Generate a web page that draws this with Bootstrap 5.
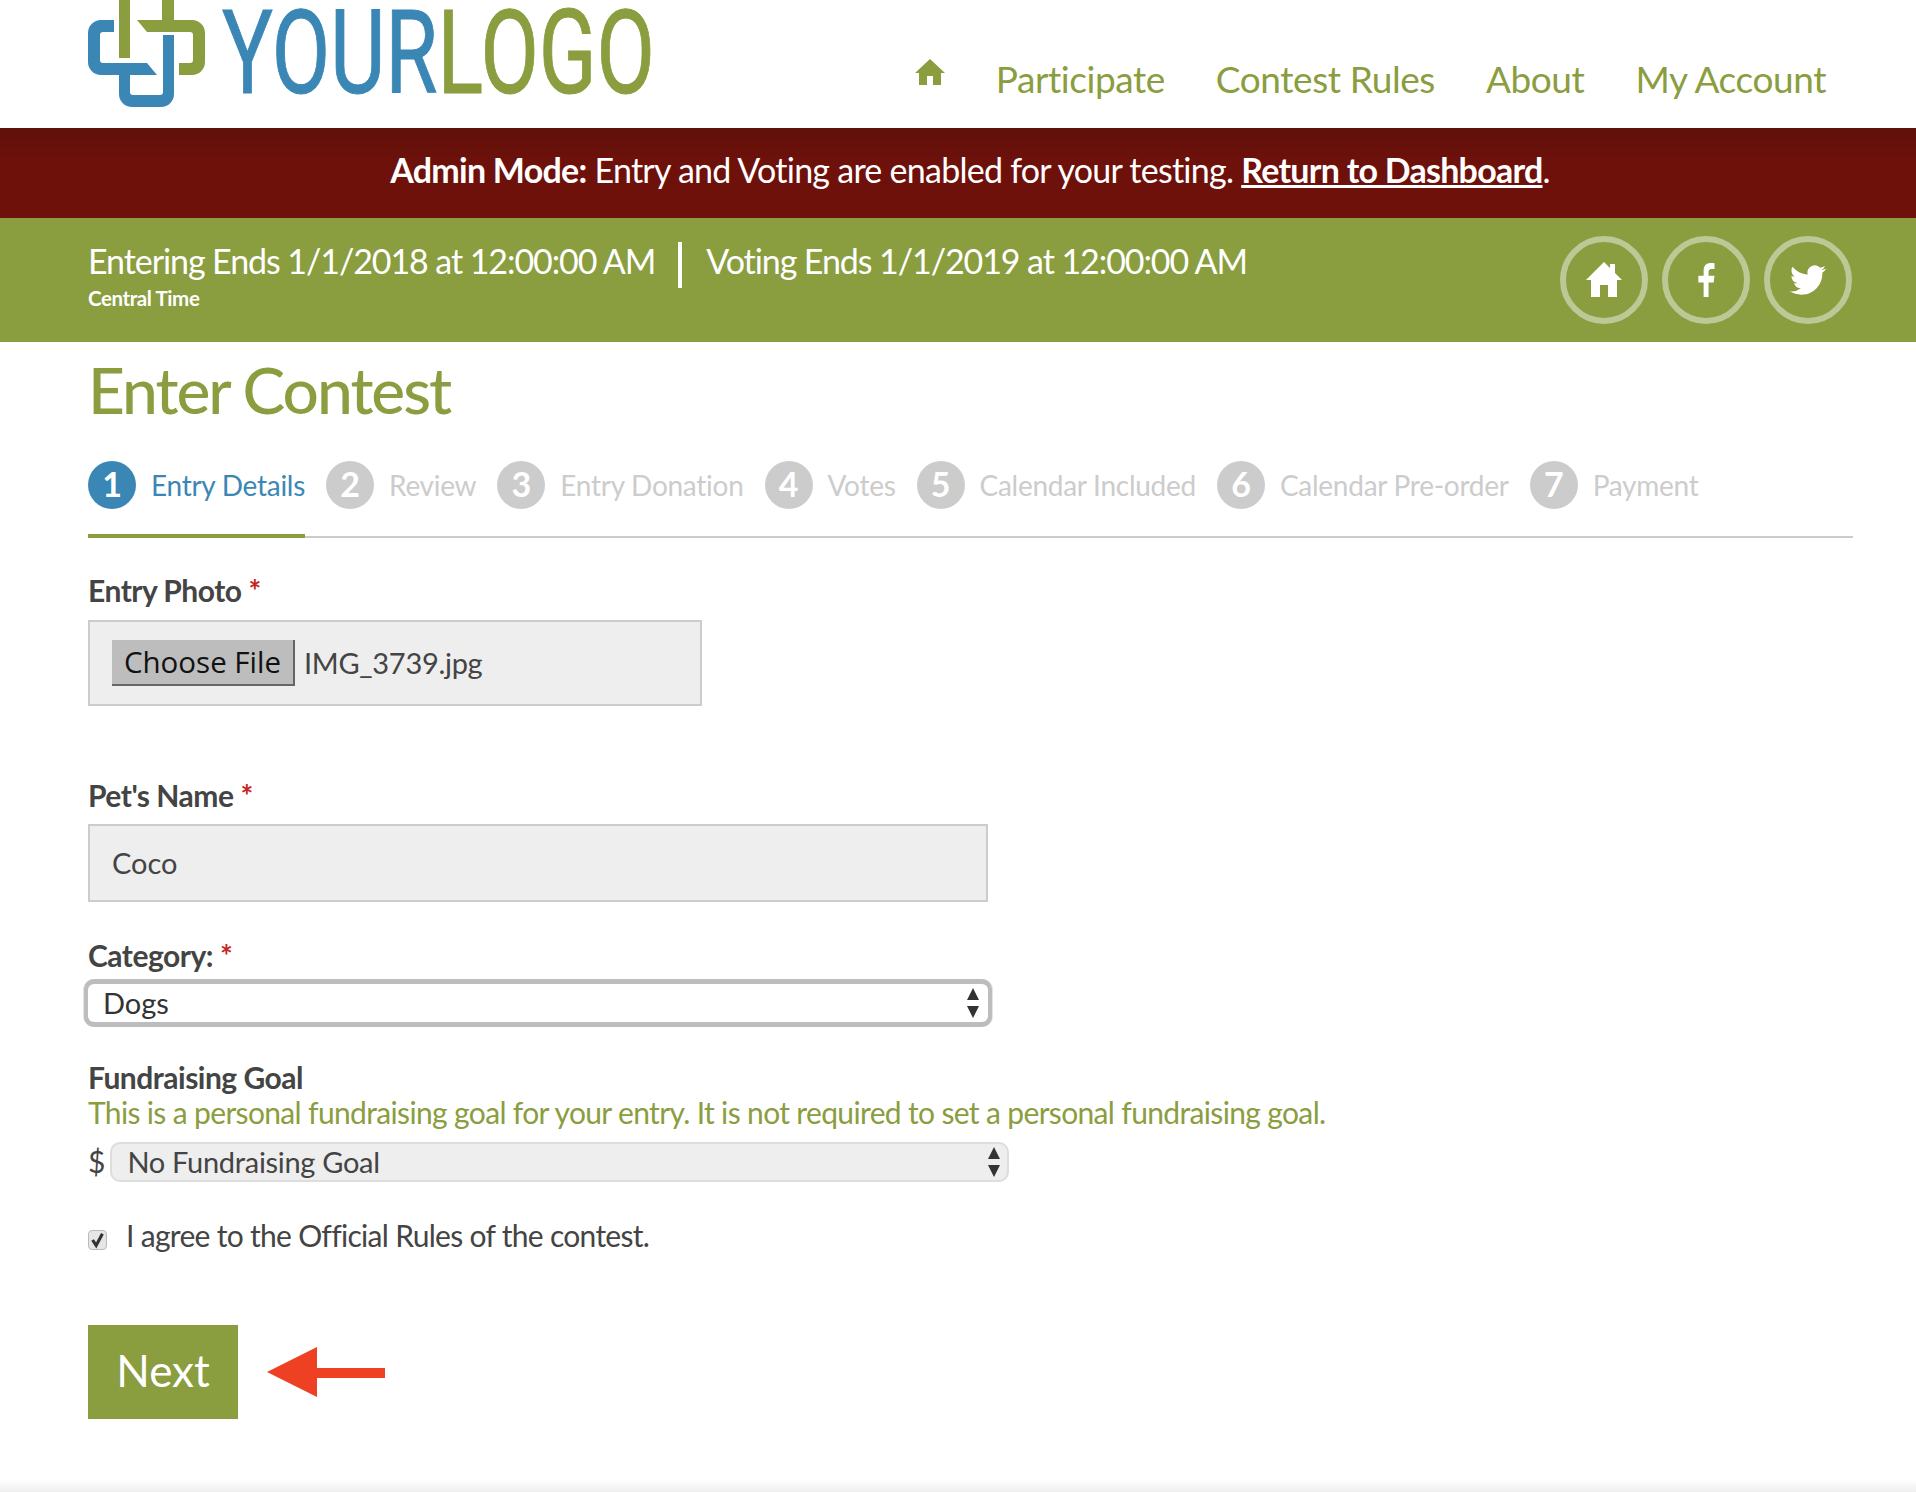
<!DOCTYPE html>
<html lang="en">
<head>
    <meta charset="UTF-8">
    <meta name="viewport" content="width=device-width, initial-scale=1.0">
    <title>Enter Contest</title>
    <link rel="stylesheet" href="https://cdn.jsdelivr.net/npm/bootstrap@5.3.3/dist/css/bootstrap.min.css">
    <script src="https://cdn.jsdelivr.net/npm/bootstrap@5.3.3/dist/js/bootstrap.bundle.min.js"></script>
    <style>
        body {
            margin: 0;
            height: 1492px;
            overflow: hidden;
            font-family: Lato, "Liberation Sans", sans-serif;
            color: #444;
            background: #fff;
        }

        .site-head {
            height: 128px;
            padding: 0 90px 0 80px;
            overflow: hidden;
        }

        .logo-word {
            font-family: Roboto, sans-serif;
            font-size: 116px;
            font-weight: 400;
            fill: #3a87b5;
            stroke: #3a87b5;
            stroke-width: 1px;
        }

        .logo-word tspan {
            fill: #8a9d3f;
            stroke: #8a9d3f;
        }

        .main-nav {
            gap: 51px;
            padding-top: 56px;
        }

        .main-nav a {
            color: #8a9d3f;
            font-size: 37px;
            line-height: 46px;
            letter-spacing: -0.42px;
            text-decoration: none;
        }

        .nav-home {
            margin: 0 0 15px;
            width: 30px;
            height: 26px;
            fill: #8a9d3f;
        }

        .admin-bar {
            height: 90px;
            padding: 0 0 8px 24px;
            background: linear-gradient(#61100a, #6e110b 40%);
            color: #fff;
            font-size: 34px;
            letter-spacing: -0.74px;
        }

        .admin-bar a {
            color: #fff;
            font-weight: 700;
        }

        .date-bar {
            height: 124px;
            background: #8a9d3f;
            color: #fff;
            padding: 0 64px 0 88px;
        }

        .date-line {
            font-size: 34px;
            line-height: 40px;
            letter-spacing: -1.08px;
            margin-top: 16px;
        }

        .date-rule {
            width: 4px;
            height: 46px;
            background: #fff;
            margin: 8px 24px 0 23px;
        }

        .tz-note {
            font-size: 20.5px;
            font-weight: 700;
            letter-spacing: -0.4px;
            line-height: 24px;
            margin-top: -2px;
        }

        .round-link {
            width: 88px;
            height: 88px;
            border: 6px solid #bcc895;
            border-radius: 50%;
        }

        .round-link svg {
            fill: #fff;
        }

        .round-row {
            gap: 14px;
        }

        .page-body {
            padding: 0 63px 0 88px;
        }

        .page-title {
            color: #8a9d3f;
            font-size: 64px;
            line-height: 76px;
            letter-spacing: -2px;
            margin: 10px 0 0;
        }

        .step-row {
            height: 78px;
            margin-top: 32px;
            border-bottom: 2px solid #ccc;
            gap: 21px;
        }

        .step-item {
            height: 78px;
            gap: 15px;
            padding-top: 1px;
            color: #ccc;
            font-size: 28px;
            line-height: 48px;
            letter-spacing: -0.27px;
            margin-bottom: -2px;
        }

        .step-item.is-on {
            color: #3a87b5;
            border-bottom: 4px solid #8a9d3f;
        }

        .step-num {
            width: 48px;
            height: 48px;
            border-radius: 50%;
            background: #ccc;
            color: #fff;
            font-size: 34px;
            line-height: 46px;
            font-weight: 700;
            text-align: center;
        }

        .is-on .step-num {
            background: #3a87b5;
        }

        .field-label {
            display: block;
            font-size: 30px;
            line-height: 36px;
            font-weight: 700;
            letter-spacing: -0.5px;
            color: #444;
            margin: 0;
        }

        .first-label {
            margin-top: 34px;
        }

        .pet-label {
            margin-top: 71px;
        }

        .cat-label {
            margin-top: 35px;
        }

        .goal-label {
            margin-top: 37px;
        }

        .req-star {
            color: #c4261d;
            margin-left: 7px;
        }

        .file-box {
            width: 614px;
            height: 86px;
            background: #eee;
            border: 2px solid #ccc;
            padding-left: 22px;
            margin-top: 12px;
            font-size: 29px;
            letter-spacing: -0.3px;
            gap: 9px;
        }

        .file-btn {
            width: 183px;
            height: 46px;
            padding: 0;
            background: #bdbdbd;
            border: 0;
            border-right: 2px solid #666;
            border-bottom: 2px solid #666;
            color: #111;
            font-family: "Open Sans", sans-serif;
            font-size: 29.5px;
            line-height: 44px;
            letter-spacing: 0;
        }

        .text-box {
            width: 900px;
            height: 78px;
            background: #eee;
            border: 2px solid #ccc;
            border-radius: 0;
            color: #444;
            font-size: 29px;
            padding: 0 22px 1px;
            margin-top: 11px;
        }

        .pick-box {
            appearance: none;
            font-size: 29px;
            color: #333;
            background-repeat: no-repeat;
            background-image: url("data:image/svg+xml,%3Csvg xmlns='http://www.w3.org/2000/svg' viewBox='0 0 14 30'%3E%3Cpath fill='%23333' d='M7 0l6 12H1zM7 30L1 18h12z'/%3E%3C/svg%3E");
            background-size: 14px 30px;
        }

        .pick-focus {
            display: block;
            width: 900px;
            height: 38px;
            margin: 11px 0 0;
            padding: 0 15px;
            background-color: #fff;
            background-position: right 8px center;
            border: 0;
            border-radius: 6px;
            line-height: 36px;
            outline: 0;
            box-shadow: 0 1px 0 4px #bdbdc0, 0 -1px 0 4px #bdbdc0, 0 0 0 5px #e4e4e6;
        }

        .goal-note {
            color: #8a9d3f;
            font-size: 30px;
            line-height: 36px;
            letter-spacing: -0.65px;
            margin-top: -1px;
        }

        .goal-row {
            gap: 5px;
            margin-top: 9px;
            font-size: 30px;
        }

        .pick-goal {
            width: 899px;
            height: 40px;
            padding: 0 15px;
            background-color: #eee;
            background-position: right 6px center;
            border: 2px solid #ddd;
            border-radius: 10px;
            line-height: 36px;
            color: #444;
            letter-spacing: -0.3px;
        }

        .agree-row {
            gap: 19px;
            margin-top: 33px;
            font-size: 30px;
            line-height: 36px;
            letter-spacing: -0.7px;
        }

        .agree-check {
            appearance: none;
            width: 19px;
            height: 20px;
            margin-top: 13px;
            border: 1px solid #bbb;
            border-radius: 4px;
            background: #e6e6e6 url("data:image/svg+xml,%3Csvg xmlns='http://www.w3.org/2000/svg' viewBox='0 0 19 20'%3E%3Cpath fill='none' stroke='%23333' stroke-width='3.5' d='M4 10l4 6 7-13'/%3E%3C/svg%3E") center / 100% 100% no-repeat;
        }

        .next-row {
            margin-top: 72px;
            gap: 29px;
        }

        .next-btn {
            width: 150px;
            height: 94px;
            padding: 0 0 4px;
            background: #8a9d3f;
            border: 0;
            border-radius: 0;
            color: #fff;
            font-size: 44px;
        }

        .foot-fade {
            position: absolute;
            left: 0;
            right: 0;
            top: 1480px;
            height: 12px;
            background: linear-gradient(#fff, #eee);
        }
    </style>
</head>
<body>
    <header class="site-head d-flex justify-content-between align-items-start">
        <svg width="580" height="112" viewBox="80 0 580 112" aria-label="Your Logo">
            <path fill="#8a9d3f" d="M119 0h11v58h-11zM162 0h12v20h-12zM137 20H192a13 13 0 0 1 13 13V62a13 13 0 0 1-13 13H179V63H190a3 3 0 0 0 3-3V35a3 3 0 0 0-3-3H147Z"/>
            <path fill="#3a87b5" d="M114 20H101a13 13 0 0 0-13 13V62a13 13 0 0 0 13 13H119V94a13 13 0 0 0 13 13H161a13 13 0 0 0 13-13V35H163V92a3 3 0 0 1-3 3H133a3 3 0 0 1-3-3V75H157L147 63H103a3 3 0 0 1-3-3V35a3 3 0 0 1 3-3H114Z"/>
            <text class="logo-word" x="222" y="93" textLength="433" lengthAdjust="spacingAndGlyphs">YOUR<tspan>LOGO</tspan></text>
        </svg>
        <nav class="main-nav d-flex align-items-center">
            <svg class="nav-home" viewBox="0 0 30 26"><path d="M15 0L30 14H26V26H18V17H12V26H4V14H0Z"/></svg>
            <a href="#">Participate</a>
            <a href="#">Contest Rules</a>
            <a href="#">About</a>
            <a href="#">My Account</a>
        </nav>
    </header>

    <div class="admin-bar d-flex align-items-center justify-content-center">
        <span><b>Admin Mode:</b> Entry and Voting are enabled for your testing. <a href="#">Return to Dashboard</a>.</span>
    </div>

    <div class="date-bar d-flex justify-content-between align-items-center">
        <div class="align-self-start">
            <div class="date-line d-flex align-items-center">
                <span>Entering Ends 1/1/2018 at 12:00:00 AM</span>
                <span class="date-rule"></span>
                <span>Voting Ends 1/1/2019 at 12:00:00 AM</span>
            </div>
            <div class="tz-note">Central Time</div>
        </div>
        <div class="round-row d-flex">
            <a href="#" class="round-link d-flex align-items-center justify-content-center">
                <svg width="36" height="36" viewBox="0 0 36 36"><path d="M18 0L24 6V2H29V11L36 18H31V35H22V23H14V35H5V18H0Z"/></svg>
            </a>
            <a href="#" class="round-link d-flex align-items-center justify-content-center">
                <svg width="34" height="34" viewBox="4 2 16 20"><path d="M13.5 13.5h3l.5-4h-3.500v-2c0-1 .3-2 2-2h1.500V2.100C16.600 2 15.900 2 14.600 2 12 2 10.600 3.700 10.600 6.700v2.800H7.500v4h3.100V22h2.900z"/></svg>
            </a>
            <a href="#" class="round-link d-flex align-items-center justify-content-center">
                <svg width="36" height="36" viewBox="0 0 24 24"><path d="M23.953 4.570a10 10 0 0 1-2.825.775 4.958 4.958 0 0 0 2.163-2.723c-.951.555-2.005.959-3.127 1.184a4.920 4.920 0 0 0-8.384 4.482C7.690 8.095 4.067 6.130 1.640 3.162a4.822 4.822 0 0 0-.666 2.475c0 1.710.870 3.213 2.188 4.096a4.904 4.904 0 0 1-2.228-.616v.060a4.923 4.923 0 0 0 3.946 4.827 4.996 4.996 0 0 1-2.212.085 4.936 4.936 0 0 0 4.604 3.417 9.867 9.867 0 0 1-6.102 2.105c-.390 0-.779-.023-1.170-.067a13.995 13.995 0 0 0 7.557 2.209c9.053 0 13.998-7.496 13.998-13.985 0-.210 0-.420-.015-.630A9.935 9.935 0 0 0 24 4.590z"/></svg>
            </a>
        </div>
    </div>

    <main class="page-body">
        <h1 class="page-title">Enter Contest</h1>

        <div class="step-row d-flex">
            <div class="step-item is-on d-flex align-items-start"><span class="step-num">1</span><span>Entry Details</span></div>
            <div class="step-item d-flex align-items-start"><span class="step-num">2</span><span>Review</span></div>
            <div class="step-item d-flex align-items-start"><span class="step-num">3</span><span>Entry Donation</span></div>
            <div class="step-item d-flex align-items-start"><span class="step-num">4</span><span>Votes</span></div>
            <div class="step-item d-flex align-items-start"><span class="step-num">5</span><span>Calendar Included</span></div>
            <div class="step-item d-flex align-items-start"><span class="step-num">6</span><span>Calendar Pre-order</span></div>
            <div class="step-item d-flex align-items-start"><span class="step-num">7</span><span>Payment</span></div>
        </div>

        <form>
            <label class="field-label first-label">Entry Photo<span class="req-star">*</span></label>
            <div class="file-box d-flex align-items-center">
                <button type="button" class="file-btn">Choose File</button>
                <span>IMG_3739.jpg</span>
            </div>

            <label class="field-label pet-label" for="petName">Pet's Name<span class="req-star">*</span></label>
            <input id="petName" class="text-box d-block" type="text" value="Coco">

            <label class="field-label cat-label" for="category">Category:<span class="req-star">*</span></label>
            <select id="category" class="pick-box pick-focus"><option>Dogs</option></select>

            <div class="field-label goal-label">Fundraising Goal</div>
            <div class="goal-note">This is a personal fundraising goal for your entry. It is not required to set a personal fundraising goal.</div>
            <div class="goal-row d-flex align-items-center">
                <span>$</span>
                <select class="pick-box pick-goal"><option>No Fundraising Goal</option></select>
            </div>

            <div class="agree-row d-flex align-items-start">
                <input class="agree-check" type="checkbox" checked>
                <span>I agree to the Official Rules of the contest.</span>
            </div>

            <div class="next-row d-flex align-items-center">
                <button type="button" class="next-btn">Next</button>
                <svg width="118" height="50" viewBox="0 0 118 50"><path fill="#ee4023" d="M0 25L50 0V21H118V31H50V50Z"/></svg>
            </div>
        </form>
    </main>
    <div class="foot-fade"></div>
</body>
</html>
